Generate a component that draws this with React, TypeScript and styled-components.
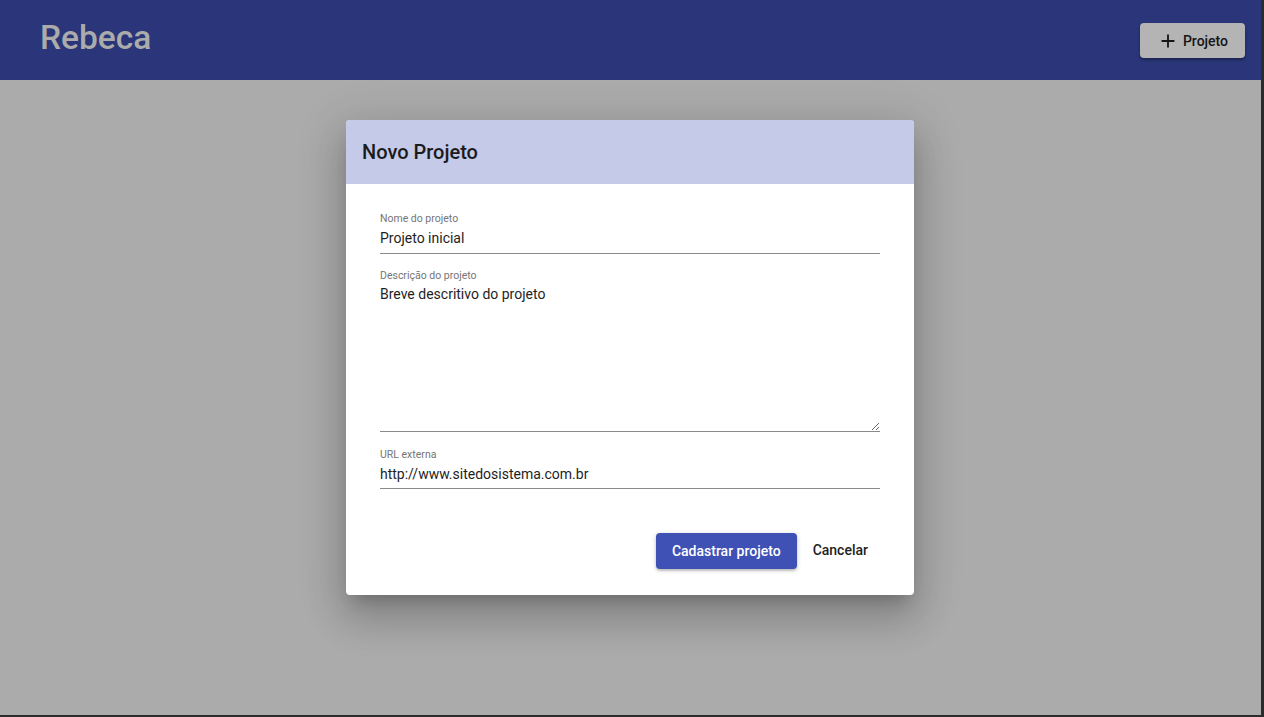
import React from "react";
import styled, { createGlobalStyle } from "styled-components";

const Global = createGlobalStyle`
  html, body { margin: 0; padding: 0; }
  body {
    background: #2b2b2b;
    font-family: Roboto, "Liberation Sans", Arial, sans-serif;
    overflow: hidden;
  }
`;

const Frame = styled.div`
  width: 1261px;
  height: 715px;
  background: #ababab;
  display: flex;
  flex-direction: column;
  position: relative;
`;

const Header = styled.header`
  height: 80px;
  background: #2a3679;
  display: flex;
  align-items: flex-start;
  justify-content: space-between;
  padding: 0 16px 0 40px;
  box-sizing: border-box;
`;

const Brand = styled.h1`
  margin: 0;
  padding-top: 15px;
  font-size: 33.5px;
  font-weight: 500;
  color: #ababab;
  letter-spacing: 0;
  line-height: 46px;
`;

const HeaderButton = styled.button`
  margin-top: 23px;
  height: 35px;
  width: 105px;
  border: none;
  border-radius: 4px;
  background: #b4b4b4;
  box-shadow: 0 2px 3px rgba(0, 0, 0, 0.35);
  display: flex;
  align-items: center;
  justify-content: center;
  gap: 4px;
  font-family: inherit;
  font-size: 14px;
  font-weight: 500;
  color: #151515;
  padding: 0;
`;

const Overlay = styled.div`
  flex: 1;
  display: flex;
  justify-content: center;
  align-items: flex-start;
  padding-top: 40px;
`;

const Dialog = styled.div`
  width: 568px;
  margin-left: -1px;
  background: #fff;
  border-radius: 4px;
  overflow: hidden;
  box-shadow: 0 11px 15px -7px rgba(0, 0, 0, 0.2), 0 24px 38px 3px rgba(0, 0, 0, 0.14),
    0 9px 46px 8px rgba(0, 0, 0, 0.12);
`;

const DialogTitle = styled.div`
  height: 64px;
  background: #c5cae9;
  display: flex;
  align-items: center;
  padding: 0 16px;
  font-size: 20px;
  font-weight: 500;
  color: #1b1b1b;
`;

const Body = styled.div`
  padding: 29px 34px 0 34px;
  display: flex;
  flex-direction: column;
`;

const Field = styled.label<{ $gap: number }>`
  display: flex;
  flex-direction: column;
  border-bottom: 1px solid #8a8a8a;
  margin-bottom: ${(p) => p.$gap}px;
`;

const Label = styled.span`
  font-size: 10.5px;
  color: #757575;
  line-height: 12px;
  height: 12px;
`;

const Input = styled.input<{ $bottom: number }>`
  border: none;
  outline: none;
  font-family: inherit;
  font-size: 14px;
  color: #1e1e1e;
  padding: 0;
  margin: 4px 0 ${(p) => p.$bottom}px 0;
  height: 18px;
  background: transparent;
`;

const TextArea = styled.textarea`
  border: none;
  outline: none;
  font-family: inherit;
  font-size: 14px;
  color: #1e1e1e;
  padding: 0;
  margin: 3px 0 0 0;
  height: 146px;
  line-height: 18px;
  resize: vertical;
  background: transparent;
  display: block;
`;

const Actions = styled.div`
  display: flex;
  justify-content: flex-end;
  align-items: center;
  gap: 8px;
  padding: 44px 38px 26px 0;
`;

const PrimaryButton = styled.button`
  height: 36px;
  padding: 0 16px;
  border: none;
  border-radius: 4px;
  background: #3f51b5;
  color: #fff;
  font-family: inherit;
  font-size: 14px;
  font-weight: 500;
  box-shadow: 0 1px 5px rgba(0, 0, 0, 0.2), 0 2px 2px rgba(0, 0, 0, 0.14);
`;

const TextButton = styled.button`
  height: 36px;
  padding: 0 8px;
  border: none;
  background: transparent;
  color: #1e1e1e;
  font-family: inherit;
  font-size: 14px;
  font-weight: 500;
  margin-top: -2px;
`;

const BottomStrip = styled.div`
  position: absolute;
  left: 0;
  bottom: -2px;
  width: 87px;
  height: 2px;
  background: #9a9a9a;
`;

export default function App() {
  return (
    <>
      <Global />
      <Frame>
        <Header>
          <Brand>Rebeca</Brand>
          <HeaderButton>
            <svg width="22" height="22" viewBox="0 0 24 24">
              <path d="M19 13h-6v6h-2v-6H5v-2h6V5h2v6h6v2z" fill="#151515" />
            </svg>
            Projeto
          </HeaderButton>
        </Header>
        <Overlay>
          <Dialog>
            <DialogTitle>Novo Projeto</DialogTitle>
            <Body>
              <Field $gap={16}>
                <Label>Nome do projeto</Label>
                <Input $bottom={6} defaultValue="Projeto inicial" />
              </Field>
              <Field $gap={17}>
                <Label>Descrição do projeto</Label>
                <TextArea defaultValue="Breve descritivo do projeto" />
              </Field>
              <Field $gap={0}>
                <Label>URL externa</Label>
                <Input $bottom={5} defaultValue="http://www.sitedosistema.com.br" />
              </Field>
            </Body>
            <Actions>
              <PrimaryButton>Cadastrar projeto</PrimaryButton>
              <TextButton>Cancelar</TextButton>
            </Actions>
          </Dialog>
        </Overlay>
        <BottomStrip />
      </Frame>
    </>
  );
}
